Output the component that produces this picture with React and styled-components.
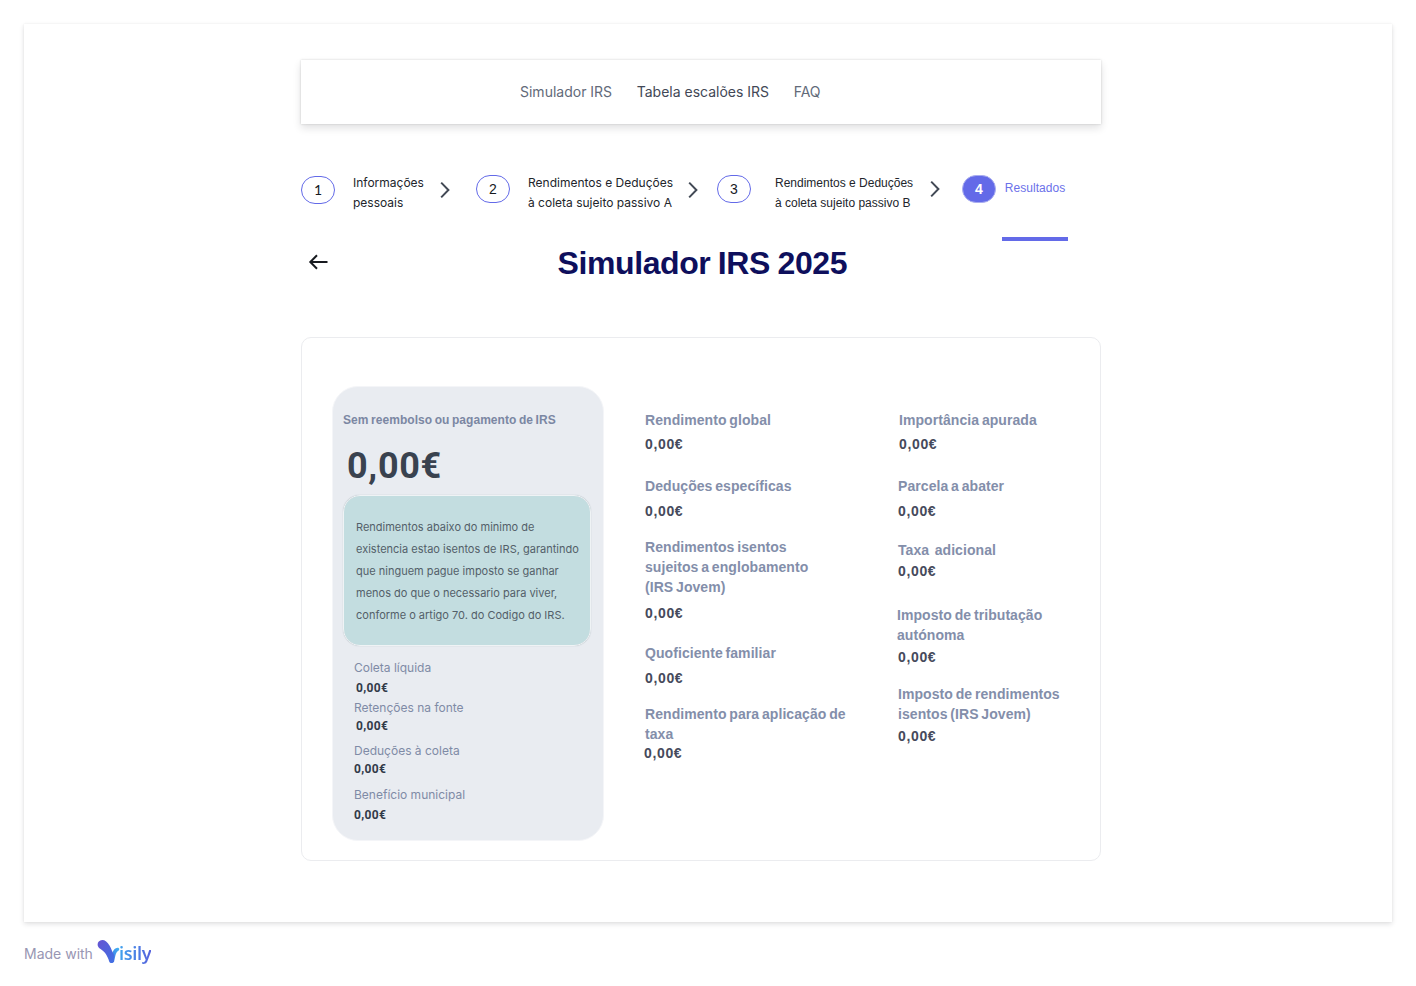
import React from 'react';
import styled, { createGlobalStyle } from 'styled-components';

const sans = 'Inter, "Liberation Sans", sans-serif';
const display = '"Liberation Sans", Arial, sans-serif';
const numeric = 'Roboto, "Liberation Sans", sans-serif';

const GlobalStyle = createGlobalStyle`
  * { box-sizing: border-box; }
  body { margin: 0; background: #fff; font-family: ${sans}; }
  p, h1, h2 { margin: 0; }
`;

const Frame = styled.div`
  margin: 24px 24px 0;
  height: 898px;
  padding: 36px 291px 0 277px;
  background: #fff;
  box-shadow: 0 2px 5px rgba(23, 26, 31, 0.13), 0 0 2px rgba(23, 26, 31, 0.06);
`;

const Nav = styled.nav`
  display: flex;
  align-items: center;
  gap: 24.6px;
  height: 64px;
  padding-left: 219px;
  background: #fff;
  box-shadow: 0 4px 8px rgba(23, 26, 31, 0.13), 0 0 2px rgba(23, 26, 31, 0.18);
`;

const NavLink = styled.a`
  font-size: 14px;
  line-height: 22px;
  color: ${(p) => (p.$active ? '#424856' : '#626a79')};
`;

const Stepper = styled.div`
  display: flex;
  align-items: flex-start;
  height: 68px;
  margin-top: 49px;
`;

const StepBadge = styled.span`
  display: flex;
  align-items: center;
  justify-content: center;
  flex: none;
  width: 34px;
  height: 28px;
  margin: ${(p) => p.$top ?? 2}px ${(p) => p.$right}px 0 0;
  border: 1px solid ${(p) => (p.$active ? '#a9adf0' : '#636ae8')};
  border-radius: 14px;
  background: ${(p) => (p.$active ? '#636ae8' : '#fff')};
  color: ${(p) => (p.$active ? '#fff' : '#171a1f')};
  font: ${(p) => (p.$active ? 'bold' : 'normal')} 14px/20px ${(p) => p.$font ?? display};
`;

const StepText = styled.p`
  flex: none;
  width: ${(p) => p.$width}px;
  font: 12px/20px ${(p) => p.$font ?? sans};
  color: #22252b;
  white-space: nowrap;
`;

const Chevron = styled.svg`
  flex: none;
  width: 12px;
  height: 18px;
  margin: ${(p) => p.$top ?? 8}px ${(p) => p.$right}px 0 0;
`;

const CurrentStep = styled.div`
  display: flex;
  flex-direction: column;
  align-items: center;
  width: 66px;
  height: 68px;
  padding-top: 5px;
  border-bottom: 4px solid #636ae8;
  font: 12px/20px ${display};
  letter-spacing: 0.05px;
  color: #6b71ea;
`;

const Heading = styled.header`
  display: flex;
  align-items: center;
  height: 44px;
  padding-left: 7px;
`;

const BackArrow = styled.svg`
  width: 20px;
  height: 16px;
  margin: -2px 229.5px 0 0;
`;

const Title = styled.h1`
  font: bold 32px/44px ${display};
  letter-spacing: -0.4px;
  word-spacing: -1px;
  color: #0e0f5c;
  white-space: nowrap;
`;

const Card = styled.section`
  display: flex;
  height: 524px;
  margin-top: 52px;
  padding: 48px 0 0 30px;
  border: 1px solid #ebecef;
  border-radius: 10px;
`;

const Summary = styled.aside`
  flex: none;
  width: 272px;
  height: 455px;
  padding: 23px 0 0 10px;
  border: 1px solid #f4f5f8;
  border-radius: 26px;
  background: #e9ecf1;
`;

const SummaryTitle = styled.h2`
  font: bold 12px/20px ${display};
  letter-spacing: 0.04px;
  word-spacing: -0.8px;
  color: #7b87a3;
`;

const Total = styled.p`
  margin: 14px 0 0 4px;
  font: bold 36px/44px ${numeric};
  letter-spacing: 0.7px;
  color: #39424f;
`;

const Notice = styled.div`
  width: 248px;
  height: 151px;
  margin-top: 7px;
  padding: 20px 0 0 12px;
  border: 1px solid #eff3f5;
  border-radius: 17px;
  background: #c3dde0;
  background-clip: padding-box;
  box-shadow: 0 0 1px rgba(60, 90, 100, 0.35);
  font-size: 11px;
  line-height: 22px;
  color: #535f69;
  white-space: pre-line;
`;

const SummaryLabel = styled.p`
  margin: ${(p) => p.$gap}px 0 0 11px;
  font-size: 12px;
  line-height: 18px;
  color: #7f8ba6;
`;

const SummaryValue = styled.p`
  margin: ${(p) => p.$gap}px 0 0 ${(p) => p.$indent}px;
  font: bold 12px/18px ${numeric};
  letter-spacing: 0.35px;
  color: #323a49;
`;

const Column = styled.div`
  flex: none;
  width: ${(p) => p.$width}px;
  margin-left: ${(p) => p.$left}px;
  padding-top: 24px;
`;

const Label = styled.h2`
  margin: ${(p) => p.$gap}px 0 0 ${(p) => p.$indent ?? 0}px;
  font: bold 14px/20px ${display};
  letter-spacing: 0.07px;
  word-spacing: -1.2px;
  color: #838eaa;
  white-space: pre;
`;

const Value = styled.p`
  margin: ${(p) => p.$gap}px 0 0 ${(p) => p.$indent ?? 0}px;
  font: bold 14px/18px ${display};
  letter-spacing: 0.65px;
  color: #464a5c;
`;

const Footer = styled.footer`
  display: flex;
  align-items: center;
  gap: 4px;
  height: 30px;
  margin: 16px 0 0 24px;
  font-size: 14px;
  color: #9896b3;
`;

const Brand = styled.span`
  display: flex;
  align-items: flex-start;
  height: 28px;
`;

const BrandMark = styled.svg`
  width: 24px;
  height: 26px;
`;

const BrandName = styled.span`
  margin: 1px 0 0 -2px;
  font: 600 18px/26px "Noto Sans", sans-serif;
  letter-spacing: -0.35px;
  background: linear-gradient(90deg, #3fa3ee, #5661dc);
  background-clip: text;
  color: transparent;
`;

const summaryItems = [
  { label: 'Coleta líquida', gap: 13, valueGap: 2, indent: 13 },
  { label: 'Retenções na fonte', gap: 2, valueGap: 0, indent: 13 },
  { label: 'Deduções à coleta', gap: 7, valueGap: 0, indent: 11 },
  { label: 'Benefício municipal', gap: 8, valueGap: 2, indent: 11 },
];

const incomeItems = [
  { label: 'Rendimento global', gap: 0, valueGap: 5 },
  { label: 'Deduções específicas', gap: 23, valueGap: 6 },
  { label: 'Rendimentos isentos\nsujeitos a englobamento\n(IRS Jovem)', gap: 17, valueGap: 7 },
  { label: 'Quoficiente familiar', gap: 21, valueGap: 6 },
  { label: 'Rendimento para aplicação de\ntaxa', gap: 17, valueGap: 0, valueIndent: -1 },
];

const taxItems = [
  { label: 'Importância apurada', gap: 0, valueGap: 5, indent: 2, valueIndent: 2 },
  { label: 'Parcela a abater', gap: 23, valueGap: 6, indent: 1, valueIndent: 1 },
  { label: 'Taxa  adicional', gap: 20, valueGap: 2, indent: 1, valueIndent: 1 },
  { label: 'Imposto de tributação\nautónoma', gap: 25, valueGap: 3, valueIndent: 1 },
  { label: 'Imposto de rendimentos\nisentos (IRS Jovem)', gap: 18, valueGap: 3, indent: 1, valueIndent: 1 },
];

function Fields({ items }) {
  return items.map((item) => (
    <React.Fragment key={item.label}>
      <Label $gap={item.gap} $indent={item.indent}>{item.label}</Label>
      <Value $gap={item.valueGap} $indent={item.valueIndent}>0,00€</Value>
    </React.Fragment>
  ));
}

function Next({ top, right }) {
  return (
    <Chevron $top={top} $right={right} viewBox="0 0 12 18" fill="none" stroke="#424955" strokeWidth="2">
      <path d="M2.2 1.6 L9.4 9 L2.2 16.4" />
    </Chevron>
  );
}

export default function App() {
  return (
    <>
      <GlobalStyle />
      <Frame>
        <Nav>
          <NavLink>Simulador IRS</NavLink>
          <NavLink $active>Tabela escalões IRS</NavLink>
          <NavLink>FAQ</NavLink>
        </Nav>
        <Stepper>
          <StepBadge $top={3} $right={18} $font="Lato, sans-serif">1</StepBadge>
          <StepText $width={86}>Informações<br />pessoais</StepText>
          <Next right={25} />
          <StepBadge $right={18}>2</StepBadge>
          <StepText $width={159}>Rendimentos e Deduções<br />à coleta sujeito passivo A</StepText>
          <Next right={18} />
          <StepBadge $right={24}>3</StepBadge>
          <StepText $width={154} $font={display}>Rendimentos e Deduções<br />à coleta sujeito passivo B</StepText>
          <Next top={7} right={21} />
          <StepBadge $active $right={6}>4</StepBadge>
          <CurrentStep>Resultados</CurrentStep>
        </Stepper>
        <Heading>
          <BackArrow viewBox="0 0 20 16" fill="none" stroke="#171a1f" strokeWidth="2">
            <path d="M19.5 8 H2.5 M9 1.2 L2.3 8 L9 14.8" />
          </BackArrow>
          <Title>Simulador IRS 2025</Title>
        </Heading>
        <Card>
          <Summary>
            <SummaryTitle>Sem reembolso ou pagamento de IRS</SummaryTitle>
            <Total>0,00€</Total>
            <Notice>
              {'Rendimentos abaixo do minimo de\nexistencia estao isentos de IRS, garantindo\nque ninguem pague imposto se ganhar\nmenos do que o necessario para viver,\nconforme o artigo 70. do Codigo do IRS.'}
            </Notice>
            {summaryItems.map((item) => (
              <React.Fragment key={item.label}>
                <SummaryLabel $gap={item.gap}>{item.label}</SummaryLabel>
                <SummaryValue $gap={item.valueGap} $indent={item.indent}>0,00€</SummaryValue>
              </React.Fragment>
            ))}
          </Summary>
          <Column $left={41} $width={210}><Fields items={incomeItems} /></Column>
          <Column $left={42} $width={180}><Fields items={taxItems} /></Column>
        </Card>
      </Frame>
      <Footer>
        Made with
        <Brand>
          <BrandMark viewBox="0 0 24 26">
            <defs>
              <linearGradient id="leaf" x1="0" y1="0" x2="1" y2="1">
                <stop offset="0" stopColor="#6654d2" />
                <stop offset="1" stopColor="#3f70e4" />
              </linearGradient>
              <linearGradient id="stem" x1="0" y1="1" x2="1" y2="0">
                <stop offset="0" stopColor="#3f6fe2" />
                <stop offset="1" stopColor="#42b4f2" />
              </linearGradient>
            </defs>
            <path fill="url(#stem)" d="M14 24 C14 16 16 9 20.5 8.8 C23 8.8 22.5 11.4 21 12 C18.5 13.5 18 19 17 23 Z" />
            <path fill="url(#leaf)" d="M5.2 1 C8 1 10.5 3 12.5 6.5 C14.5 10 15.5 13.5 17.3 16 L17 22 C16.4 24.6 13 24.6 12.2 22.5 C10.4 16.5 8 13 3.2 9.8 C-1.2 7.2 0.4 1 5.2 1 Z" />
          </BrandMark>
          <BrandName>isily</BrandName>
        </Brand>
      </Footer>
    </>
  );
}
